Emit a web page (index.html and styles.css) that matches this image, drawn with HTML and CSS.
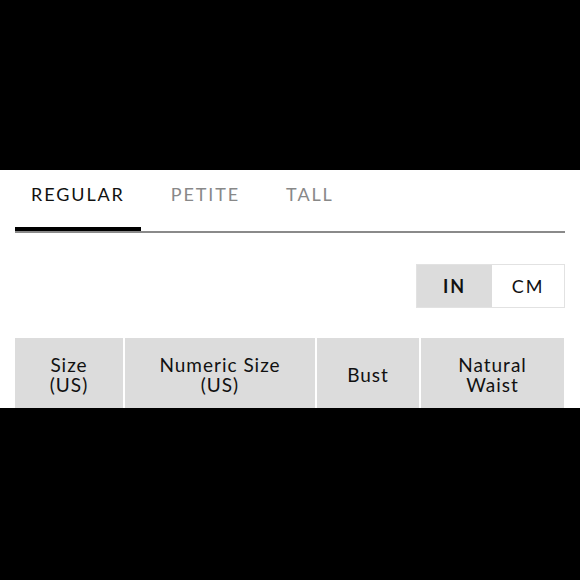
FILE: index.html
```html
<!DOCTYPE html>
<html>
<head>
<meta charset="utf-8">
<link rel="stylesheet" href="styles.css">
</head>
<body>
<div class="panel">
  <div class="tabs">
    <div class="tab active">REGULAR</div>
    <div class="tab">PETITE</div>
    <div class="tab">TALL</div>
  </div>
  <div class="units">
    <div class="toggle">
      <div class="unit on">IN</div>
      <div class="unit">CM</div>
    </div>
  </div>
  <div class="chart">
    <div class="cell">Size<br>(US)</div>
    <div class="cell">Numeric Size<br>(US)</div>
    <div class="cell">Bust</div>
    <div class="cell">Natural<br>Waist</div>
  </div>
</div>
</body>
</html>
```
FILE: styles.css
```css
html, body {
  margin: 0;
  padding: 0;
  background: #000;
}
body {
  width: 580px;
  height: 580px;
  font-family: "Lato", "Open Sans", sans-serif;
}
.panel {
  margin-top: 170px;
  height: 238px;
  background: #fff;
  overflow: hidden;
  padding: 0 15px;
}
.tabs {
  display: flex;
  gap: 14px;
  border-bottom: 2px solid #8a8a8a;
  height: 61px;
}
.tab {
  padding: 13px 16px 0 16px;
  font-size: 18px;
  letter-spacing: 1.9px;
  color: #888;
  line-height: 22px;
  margin-bottom: -2px;
  border-bottom: 4px solid transparent;
  height: 44px;
}
.tab.active {
  color: #111;
  border-bottom-color: #000;
}
.units {
  display: flex;
  justify-content: flex-end;
  margin-top: 31px;
}
.toggle {
  display: flex;
  border: 1px solid #e2e2e2;
  height: 42px;
}
.unit {
  display: flex;
  align-items: center;
  justify-content: center;
  font-size: 18px;
  letter-spacing: 2px;
  color: #111;
}
.unit:first-child {
  width: 75px;
}
.unit:last-child {
  width: 72px;
}
.unit.on {
  background: #dcdcdc;
  font-weight: 700;
}
.chart {
  margin-top: 30px;
  width: 549px;
  display: grid;
  grid-template-columns: 108px 190px 102px 143px;
  column-gap: 2px;
}
.cell {
  background: #dcdcdc;
  height: 74px;
  display: flex;
  align-items: center;
  justify-content: center;
  font-size: 19px;
  line-height: 20px;
  letter-spacing: 1px;
  color: #111;
  text-align: center;
}
```
